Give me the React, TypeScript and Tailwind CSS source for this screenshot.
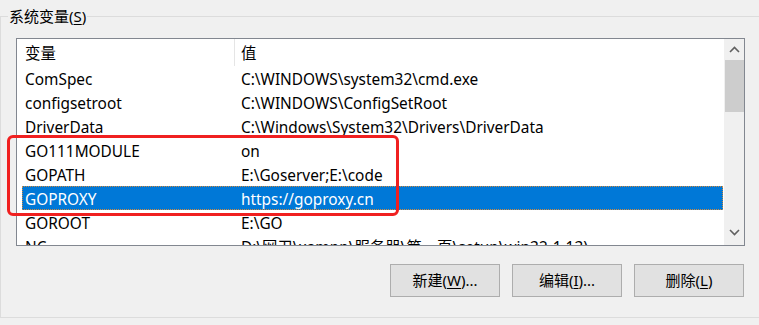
import React from "react";

const rows: [string, string][] = [
  ["ComSpec", "C:\\WINDOWS\\system32\\cmd.exe"],
  ["configsetroot", "C:\\WINDOWS\\ConfigSetRoot"],
  ["DriverData", "C:\\Windows\\System32\\Drivers\\DriverData"],
  ["GO111MODULE", "on"],
  ["GOPATH", "E:\\Goserver;E:\\code"],
  ["GOPROXY", "https://goproxy.cn"],
  ["GOROOT", "E:\\GO"],
  ["NC", "D:\\网卫\\xampp\\服务器\\第一页\\setup\\win32-1.13)"],
];

const font = { fontFamily: '"Noto Sans", "Noto Sans CJK SC", sans-serif' };

function Btn({ label, u, rest }: { label: string; u: string; rest: string }) {
  return (
    <button className="w-[110px] h-[33px] bg-[#e1e1e1] border border-[#adadad] text-[15px] text-black flex items-center justify-center">
      {label}(<span className="underline underline-offset-2">{u}</span>){rest}
    </button>
  );
}

export default function App() {
  return (
    <div className="w-[759px] h-[325px] bg-[#f0f0f0] overflow-hidden relative" style={font}>
      <div className="pt-[16px]">
        <div className="relative border-l border-t border-b border-[#dcdcdc] h-[302px] ml-0 w-[800px]">
          <div className="absolute left-[7px] top-[-12px] px-[1px] bg-[#f0f0f0] text-[15px] leading-[22px] text-black">
            系统变量(<span className="underline underline-offset-2">S</span>)
          </div>
          <div className="ml-[15px] mt-[21px] w-[729px] h-[208px] border border-[#828790] bg-white flex">
            <div className="flex-1 flex flex-col overflow-hidden">
              <div className="h-[27px] flex items-center text-[15.4px] text-black shrink-0">
                <div className="w-[218px] pl-[8px] pt-[2px] h-full flex items-center border-r border-[#e5e5e5]">变量</div>
                <div className="pl-[6px] pt-[2px]">值</div>
              </div>
              {rows.map(([k, v]) => {
                const sel = k === "GOPROXY";
                return (
                  <div
                    key={k}
                    className={
                      sel
                        ? "h-[24px] shrink-0 ml-[5px] pt-[3px] flex items-center text-[15.4px] text-white bg-[#0078d7] border border-dotted border-[#d08a40]"
                        : "h-[24px] shrink-0 ml-[5px] pt-[3px] flex items-center text-[15.4px] text-black border border-transparent"
                    }
                  >
                    <div className="w-[218px] pl-[2px] whitespace-nowrap">{k}</div>
                    <div className="whitespace-nowrap">{v}</div>
                  </div>
                );
              })}
            </div>
            <div className="w-[20px] bg-[#f0f0f0] flex flex-col items-center shrink-0 ml-[1px]">
              <div className="h-[21px] flex items-center justify-center">
                <svg width="11" height="7" viewBox="0 0 11 7"><path d="M1 6 L5.5 1.5 L10 6" fill="none" stroke="#606060" strokeWidth="1.6" /></svg>
              </div>
              <div className="w-[19px] h-[52px] bg-[#cdcdcd]" />
              <div className="flex-1" />
              <div className="h-[21px] flex items-center justify-center mb-[2px]">
                <svg width="11" height="7" viewBox="0 0 11 7"><path d="M1 1 L5.5 5.5 L10 1" fill="none" stroke="#606060" strokeWidth="1.6" /></svg>
              </div>
            </div>
          </div>
          <div className="ml-[389px] mt-[18px] flex gap-[12px]">
            <Btn label="新建" u="W" rest="..." />
            <Btn label="编辑" u="I" rest="..." />
            <Btn label="删除" u="L" rest="" />
          </div>
        </div>
      </div>
      <div className="absolute left-[7px] top-[135px] w-[392px] h-[81px] border-[3px] border-[#f02020] rounded-[6px] pointer-events-none" />
    </div>
  );
}
